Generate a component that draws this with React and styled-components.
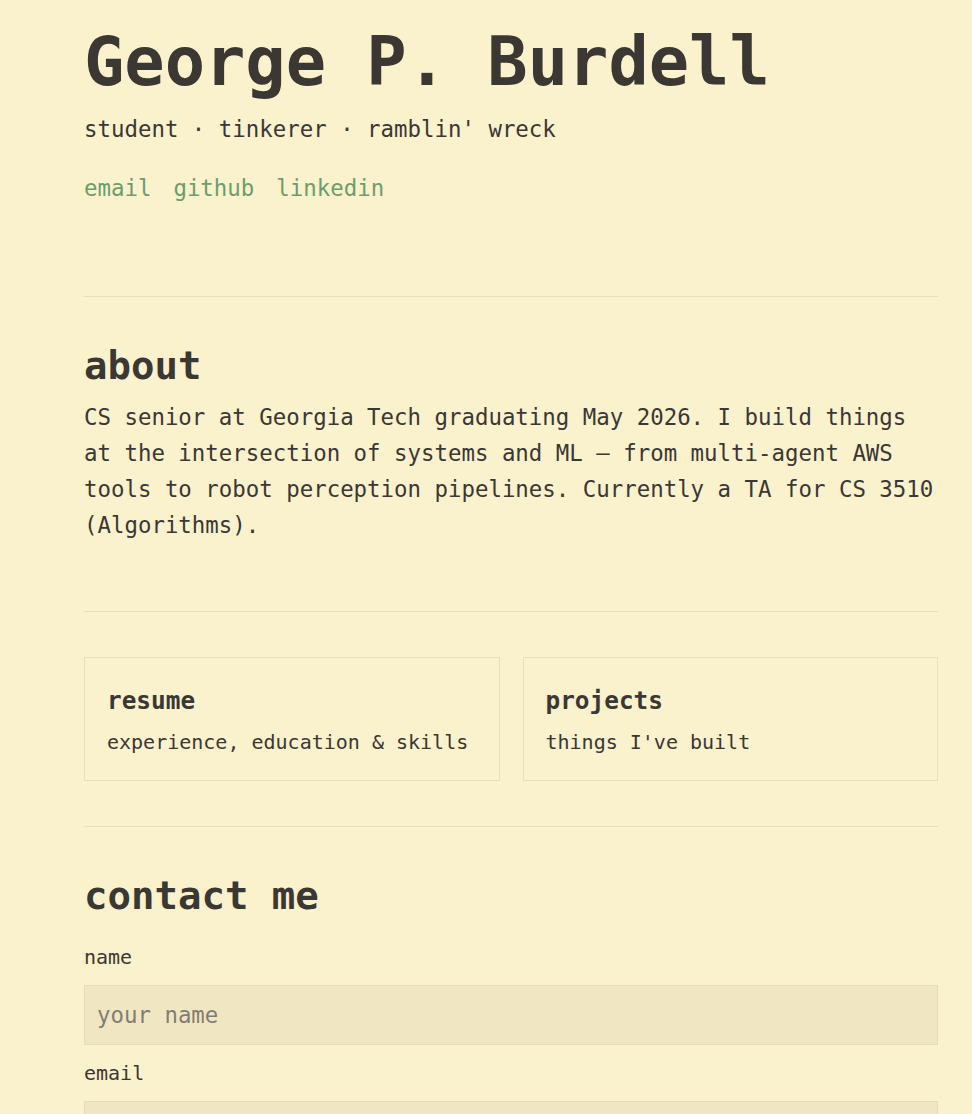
import React from 'react';
import styled, { createGlobalStyle } from 'styled-components';

const GlobalStyle = createGlobalStyle`
    html, body {
        margin: 0;
        padding: 0;
        background: #faf1cd;
    }
    body {
        font-family: 'DejaVu Sans Mono', 'Liberation Mono', monospace;
        color: #3b3733;
    }
    * {
        box-sizing: border-box;
    }
`;

const Page = styled.main`
    width: 854px;
    margin-left: 84px;
    padding-top: 22px;
`;

const Header = styled.header`
    padding-bottom: 89px;
`;

const Name = styled.h1`
    margin: 0;
    font-size: 67px;
    line-height: 80px;
    font-weight: 700;
`;

const Tagline = styled.p`
    margin: 10px 0 0;
    font-size: 22.4px;
    line-height: 1.6;
`;

const Links = styled.nav`
    display: flex;
    gap: 22px;
    margin-top: 23px;
`;

const Link = styled.a`
    font-size: 22.4px;
    line-height: 1.6;
    color: #6c9d6c;
    text-decoration: none;
`;

const Section = styled.section`
    border-top: 1px solid #e9dfb9;
    padding: ${(props) => props.$pad || '46px 0 68px'};
`;

const Heading = styled.h2`
    margin: 0;
    font-size: 39px;
    line-height: 1.2;
    font-weight: 700;
`;

const Paragraph = styled.p`
    margin: 10px 0 0;
    font-size: 22.4px;
    line-height: 36px;
`;

const CardGrid = styled.div`
    display: grid;
    grid-template-columns: 1fr 1fr;
    gap: 23px;
`;

const Card = styled.a`
    display: block;
    height: 124px;
    padding: 28px 22px 0;
    border: 1px solid #e9dfb9;
    color: inherit;
    text-decoration: none;
`;

const CardTitle = styled.h3`
    margin: 0;
    font-size: 24.4px;
    line-height: 1.2;
    font-weight: 700;
`;

const CardText = styled.p`
    margin: 11px 0 0;
    font-size: 20px;
    line-height: 30px;
`;

const Form = styled.form`
    display: flex;
    flex-direction: column;
    margin-top: 22px;
`;

const Label = styled.label`
    font-size: 20px;
    line-height: 30px;
    margin-bottom: 13px;
`;

const Input = styled.input`
    height: 60px;
    width: 100%;
    padding: 0 12px;
    margin-bottom: 13px;
    background: #f1e6c2;
    border: 1px solid #e8dcb6;
    font-family: inherit;
    font-size: 22.4px;
    color: #3b3733;
    outline: none;
    &::placeholder {
        color: #827d74;
    }
`;

function App() {
    return (
        <>
            <GlobalStyle />
            <Page>
                <Header>
                    <Name>George P. Burdell</Name>
                    <Tagline>student · tinkerer · ramblin' wreck</Tagline>
                    <Links>
                        <Link href="#">email</Link>
                        <Link href="#">github</Link>
                        <Link href="#">linkedin</Link>
                    </Links>
                </Header>
                <Section>
                    <Heading>about</Heading>
                    <Paragraph>
                        CS senior at Georgia Tech graduating May 2026. I build things
                        at the intersection of systems and ML — from multi-agent AWS
                        tools to robot perception pipelines. Currently a TA for CS 3510
                        (Algorithms).
                    </Paragraph>
                </Section>
                <Section $pad="45px 0 45px">
                    <CardGrid>
                        <Card href="#">
                            <CardTitle>resume</CardTitle>
                            <CardText>experience, education &amp; skills</CardText>
                        </Card>
                        <Card href="#">
                            <CardTitle>projects</CardTitle>
                            <CardText>things I've built</CardText>
                        </Card>
                    </CardGrid>
                </Section>
                <Section $pad="46px 0 40px">
                    <Heading>contact me</Heading>
                    <Form>
                        <Label htmlFor="name">name</Label>
                        <Input id="name" placeholder="your name" />
                        <Label htmlFor="email">email</Label>
                        <Input id="email" placeholder="your email" />
                    </Form>
                </Section>
            </Page>
        </>
    );
}

export default App;
